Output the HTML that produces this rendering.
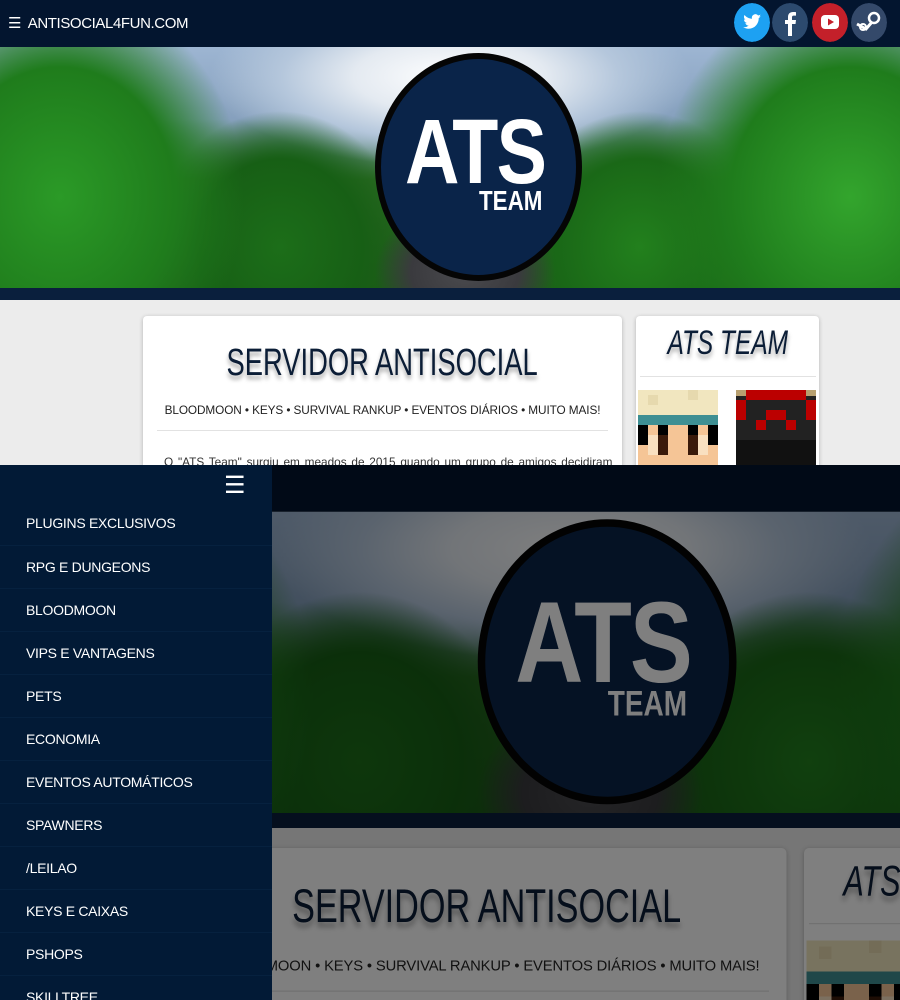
<!DOCTYPE html>
<html><head><meta charset="utf-8">
<style>
*{margin:0;padding:0;box-sizing:border-box}
html,body{width:900px;height:1000px;overflow:hidden;background:#ececec;font-family:"Liberation Sans",sans-serif}
.page{position:absolute;left:0;top:0;width:900px;height:470px;background:#ececec;overflow:hidden}
.nav{position:absolute;left:0;top:0;width:900px;height:47px;background:#03152f}
.nav .brand{position:absolute;left:8px;top:14px;color:#fff;font-size:15px;letter-spacing:-0.4px}
.soc{position:absolute;top:3px;width:36px;height:39px;border-radius:50%}
.banner{position:absolute;left:0;top:47px;width:900px;height:241px;overflow:hidden;
background:
radial-gradient(ellipse 90px 70px at 465px 225px,#4a4a4e 0,#3a3a3e 60%,transparent 100%),
radial-gradient(ellipse 230px 260px at 60px 150px,#2b9a27 0,#1f7c1c 50%,transparent 80%),
radial-gradient(ellipse 240px 260px at 850px 150px,#33a52d 0,#1f7c1c 50%,transparent 80%),
radial-gradient(ellipse 150px 160px at 280px 200px,#1c6e19 0,#175f15 55%,transparent 85%),
radial-gradient(ellipse 150px 160px at 640px 200px,#22801d 0,#1a6817 55%,transparent 85%),
radial-gradient(ellipse 240px 90px at 450px 30px,#ffffff 0,#e4eaf1 40%,#b5c7dc 70%,transparent 100%),
linear-gradient(180deg,#9db5d2 0,#86a0bd 30%,#2a6a22 55%,#1d5a18 100%)}
.band{position:absolute;left:0;top:288px;width:900px;height:12px;background:#0a1f3d}
.logo{position:absolute;left:375px;top:53px;width:207px;height:228px;border-radius:50%;background:#0a2449;border:6px solid #050505}
.ats{position:absolute;left:405px;top:106px;color:#fff;font-weight:bold;font-size:92px;line-height:1;transform:scaleX(.82);transform-origin:left top;letter-spacing:-2px}
.team{position:absolute;left:479px;top:187px;color:#fff;font-weight:bold;font-size:28px;line-height:1;transform:scaleX(.8);transform-origin:left top}
.card{position:absolute;background:#fff;border-radius:4px;box-shadow:0 1px 4px rgba(0,0,0,.25)}
.c1{left:143px;top:316px;width:479px;height:200px}
.c2{left:636px;top:316px;width:183px;height:200px}
.title{position:absolute;left:0;width:100%;text-align:center;color:#0b1d36;font-size:38px;line-height:1;text-shadow:0 4px 5px rgba(0,0,0,.35);}
.title span{display:inline-block;transform:scaleX(.72)}
.sub{position:absolute;left:0;width:100%;top:87px;text-align:center;font-size:11.8px;color:#222;letter-spacing:-0.1px}
.hr{position:absolute;height:1px;background:#e2e2e2}
.para{position:absolute;left:21px;top:139px;width:440px;font-size:11.8px;color:#333;white-space:nowrap;word-spacing:1.5px}
.bottom{position:absolute;left:0;top:465px;width:900px;height:535px;overflow:hidden}
.scaled{position:absolute;left:9px;top:-12px;transform:scale(1.25);transform-origin:0 0}
.shade{position:absolute;left:0;top:0;width:900px;height:535px;background:rgba(0,0,0,.5)}
.side{position:absolute;left:0;top:0;width:272px;height:535px;background:#021a36}
.side .ham{position:absolute;left:224px;top:6px;color:#fff;font-size:24px}
.side ul{list-style:none;position:absolute;left:0;top:37px;width:272px}
.side li{height:43px;line-height:43px;padding-left:26px;color:#fff;font-size:14px;border-top:1px solid #06213f;letter-spacing:-0.3px}
</style></head><body>

<div class="page" id="pg">
  <div class="banner"></div>
  <div class="band"></div>
  <div class="logo"></div>
  <div class="ats">ATS</div>
  <div class="team">TEAM</div>
  <div class="nav">
    <div class="brand">☰&nbsp; ANTISOCIAL4FUN.COM</div>
    <svg class="soc" style="left:734px" viewBox="0 0 36 39"><ellipse cx="18" cy="19.5" rx="18" ry="19.5" fill="#1da1f2"/><path d="M27 13c-.7.3-1.4.5-2.1.6.8-.5 1.3-1.2 1.6-2-.7.4-1.5.7-2.3.9a3.6 3.6 0 0 0-6.2 3.3c-3-.2-5.7-1.6-7.5-3.800-1 1.7-.5 3.8 1.1 4.8-.6 0-1.2-.2-1.6-.4 0 1.8 1.2 3.3 2.9 3.6-.5.2-1.1.2-1.6.1.5 1.5 1.9 2.5 3.4 2.5A7.3 7.3 0 0 1 9 24.1c1.6 1 3.5 1.6 5.5 1.6 6.7 0 10.4-5.6 10.2-10.6.8-.5 1.4-1.2 1.9-2z" fill="#fff"/></svg>
    <svg class="soc" style="left:772px" viewBox="0 0 36 39"><ellipse cx="18" cy="19.5" rx="18" ry="19.5" fill="#2c4a6e"/><path d="M20 33V21h3.5l.5-4h-4v-2.5c0-1.1.3-1.9 1.9-1.9H24V9.1c-.4 0-1.6-.1-3-.1-3 0-5 1.8-5 5.1V17h-3v4h3v12z" fill="#fff"/></svg>
    <svg class="soc" style="left:812px" viewBox="0 0 36 39"><ellipse cx="18" cy="19.5" rx="18" ry="19.5" fill="#c4202a"/><rect x="9" y="12" width="18" height="14" rx="4" fill="#fff"/><path d="M16 15.5v7l6-3.5z" fill="#c4202a"/></svg>
    <svg class="soc" style="left:851px" viewBox="0 0 36 39"><ellipse cx="18" cy="19.5" rx="18" ry="19.5" fill="#34496a"/><circle cx="23" cy="15" r="5" fill="none" stroke="#fff" stroke-width="2.5"/><path d="M6 21l9 5 6-7" stroke="#fff" stroke-width="3" fill="none"/><circle cx="12" cy="24" r="3" fill="none" stroke="#fff" stroke-width="2"/></svg>
  </div>
  <div class="card c1">
    <div class="title" style="top:28px"><span>SERVIDOR ANTISOCIAL</span></div>
    <div class="sub">BLOODMOON • KEYS • SURVIVAL RANKUP • EVENTOS DIÁRIOS • MUITO MAIS!</div>
    <div class="hr" style="left:14px;top:114px;width:451px"></div>
    <div class="para">O "ATS Team" surgiu em meados de 2015 quando um grupo de amigos decidiram</div>
  </div>
  <div class="card c2">
    <div class="title" style="top:10px;font-size:34px;font-style:italic"><span>ATS TEAM</span></div>
    <div class="hr" style="left:4px;top:60px;width:176px"></div>
    <svg style="position:absolute;left:2px;top:74px" width="80" height="90" viewBox="0 0 8 9" shape-rendering="crispEdges">
      <rect width="8" height="2.5" fill="#f1e6bf"/><rect x="1" y=".5" width="1" height="1" fill="#e6d9ae"/><rect x="5" y="0" width="1" height="1" fill="#e6d9ae"/>
      <rect y="2.5" width="8" height="1" fill="#3e8f93"/>
      <rect y="3.5" width="8" height="1" fill="#000"/><rect x="1" y="3.5" width="6" height="1" fill="#f5c596"/><rect x="2" y="3.5" width="1" height="1" fill="#000"/><rect x="5" y="3.5" width="1" height="1" fill="#000"/>
      <rect y="4.5" width="8" height="4.5" fill="#f5c596"/><rect y="4.5" width="1" height="1" fill="#000"/><rect x="7" y="4.5" width="1" height="1" fill="#000"/>
      <rect x="1" y="4.5" width="1" height="2" fill="#f9e0c0"/><rect x="2" y="4.5" width="1" height="2" fill="#3a1a0a"/><rect x="5" y="4.5" width="1" height="2" fill="#3a1a0a"/><rect x="6" y="4.5" width="1" height="2" fill="#f9e0c0"/>
    </svg>
    <svg style="position:absolute;left:100px;top:74px" width="80" height="90" viewBox="0 0 8 9" shape-rendering="crispEdges">
      <rect width="8" height="9" fill="#222"/>
      <rect x="1" y="0" width="6" height="1" fill="#b00"/><rect x="0" y="0" width="1" height=".6" fill="#b8a070"/><rect x="7" y="0" width="1" height=".6" fill="#b8a070"/>
      <rect y="1" width="1" height="2" fill="#b00"/><rect x="7" y="1" width="1" height="2" fill="#b00"/>
      <rect x="3" y="2" width="2" height="1" fill="#b00"/><rect x="2" y="3" width="1" height="1" fill="#b00"/><rect x="5" y="3" width="1" height="1" fill="#b00"/>
      <rect y="5" width="8" height="4" fill="#111"/>
    </svg>
  </div>
</div>

<div class="bottom">
  <div class="scaled" id="copy"></div>
  <div class="shade"></div>
  <div class="side">
    <div class="ham">☰</div>
    <ul>
      <li style="border-top:none">PLUGINS EXCLUSIVOS</li>
      <li>RPG E DUNGEONS</li>
      <li>BLOODMOON</li>
      <li>VIPS E VANTAGENS</li>
      <li>PETS</li>
      <li>ECONOMIA</li>
      <li>EVENTOS AUTOMÁTICOS</li>
      <li>SPAWNERS</li>
      <li>/LEILAO</li>
      <li>KEYS E CAIXAS</li>
      <li>PSHOPS</li>
      <li>SKILLTREE</li>
    </ul>
  </div>
</div>
<script>
var c=document.getElementById('pg').cloneNode(true);c.removeAttribute('id');c.style.position='relative';
document.getElementById('copy').appendChild(c);
</script>
</body></html>
